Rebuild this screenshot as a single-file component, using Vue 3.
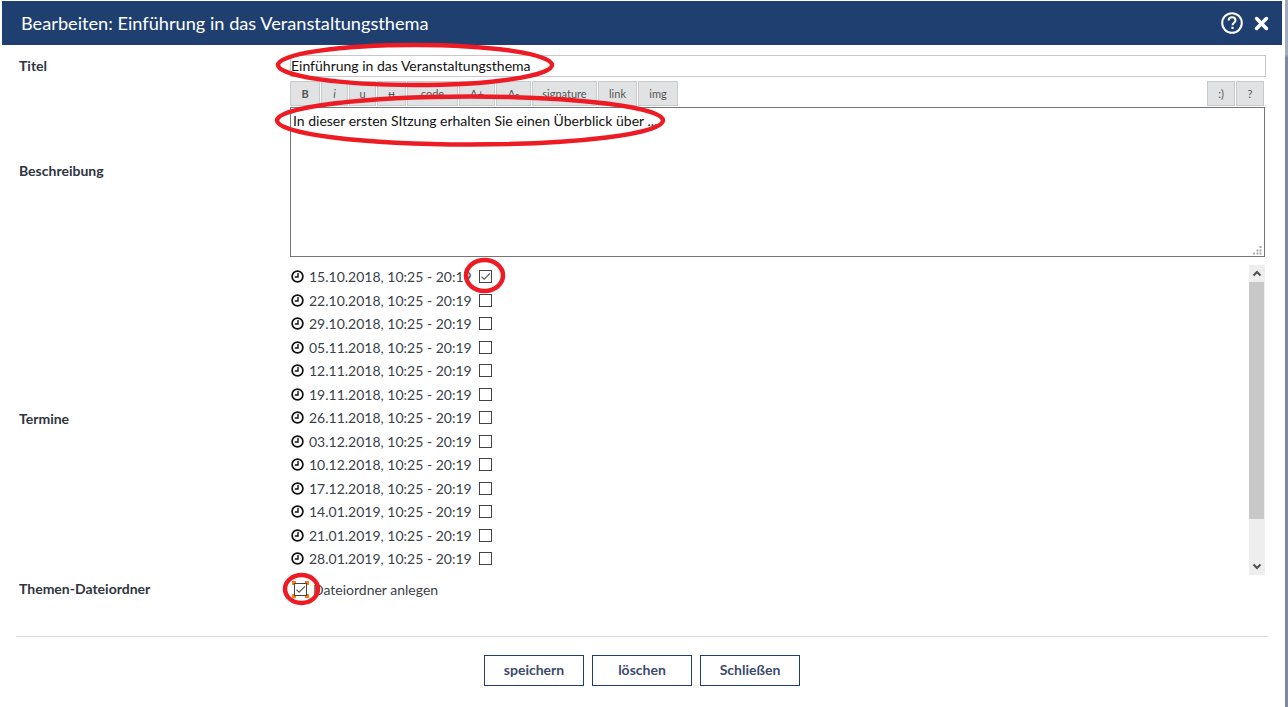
<template>
  <div class="page">
    <div class="dialog">
      <header class="titlebar">
        <span class="title">Bearbeiten: Einführung in das Veranstaltungsthema</span>
        <div class="title-icons">
          <svg width="22" height="22" viewBox="0 0 22 22">
            <circle cx="11" cy="11" r="9.8" fill="none" stroke="#fff" stroke-width="2" />
            <path d="M7.6 8.6c0-2.2 1.5-3.3 3.5-3.3s3.4 1.1 3.4 3c0 2.6-3 2.4-3 5" fill="none" stroke="#fff" stroke-width="2" />
            <rect x="10.4" y="14.8" width="2.2" height="2.2" fill="#fff" />
          </svg>
          <svg width="15" height="15" viewBox="0 0 15 15">
            <path d="M2.6 2.6l9.8 9.8M12.4 2.6l-9.8 9.8" stroke="#fff" stroke-width="3.6" stroke-linecap="round" />
          </svg>
        </div>
      </header>

      <form class="form" @submit.prevent>
        <label class="label label-title">Titel</label>
        <input class="title-input" type="text" value="Einführung in das Veranstaltungsthema" readonly />

        <label class="label label-desc">Beschreibung</label>
        <div class="editor">
          <div class="toolbar">
            <div class="tools">
              <button v-for="(b, i) in tools" :key="i" type="button" class="tool" :class="b.cls" :style="{ width: b.w + 'px' }">{{ b.text }}</button>
            </div>
            <div class="tools">
              <button type="button" class="tool small">:)</button>
              <button type="button" class="tool small">?</button>
            </div>
          </div>
          <div class="text-wrap">
            <textarea class="text" readonly>In dieser ersten SItzung erhalten Sie einen Überblick über ...</textarea>
            <svg class="grip" width="9" height="9" viewBox="0 0 9 9" fill="#a8a8a8">
              <rect x="6.5" y="0" width="2" height="2" />
              <rect x="3.5" y="3.5" width="2" height="2" />
              <rect x="6.5" y="3.5" width="2" height="2" />
              <rect x="0" y="6.5" width="2" height="2" />
              <rect x="3.5" y="6.5" width="2" height="2" />
              <rect x="6.5" y="6.5" width="2" height="2" />
            </svg>
          </div>
        </div>

        <label class="label label-dates">Termine</label>
        <div class="dates">
          <ul class="date-list">
            <li v-for="(d, i) in dates" :key="d" class="date">
              <svg class="clock" width="13" height="13" viewBox="0 0 13 13">
                <circle cx="6.5" cy="6.5" r="5.4" fill="none" stroke="#111" stroke-width="1.7" />
                <path d="M7 3v4H3.8" fill="none" stroke="#111" stroke-width="1.4" />
              </svg>
              <span class="date-text">{{ d }}, 10:25 - 20:19</span>
              <span class="check">
                <svg v-if="i === 0" width="11" height="11" viewBox="0 0 11 11">
                  <path d="M1.5 5.6l2.6 2.6L10 2.4" fill="none" stroke="#555" stroke-width="1.2" />
                </svg>
              </span>
            </li>
          </ul>
          <div class="scrollbar">
            <svg width="16" height="17" viewBox="0 0 16 17">
              <path d="M4.5 10.5L8 7l3.5 3.5" fill="none" stroke="#505050" stroke-width="2" />
            </svg>
            <div class="track"><div class="thumb"></div></div>
            <svg width="16" height="17" viewBox="0 0 16 17">
              <path d="M4.5 6.5L8 10l3.5-3.5" fill="none" stroke="#505050" stroke-width="2" />
            </svg>
          </div>
        </div>

        <label class="label label-folder">Themen-Dateiordner</label>
        <div class="folder">
          <span class="check focused">
            <svg width="11" height="11" viewBox="0 0 11 11">
              <path d="M1.5 5.6l2.6 2.6L10 2.4" fill="none" stroke="#555" stroke-width="1.2" />
            </svg>
            <svg class="corners" width="17" height="17" viewBox="0 0 17 17">
              <path d="M1 4V1h3M13 1h3v3M16 13v3h-3M4 16H1v-3" fill="none" stroke="#ff7a00" stroke-width="2" />
            </svg>
          </span>
          <span>Dateiordner anlegen</span>
        </div>
      </form>

      <div class="actions">
        <button type="button" class="action">speichern</button>
        <button type="button" class="action">löschen</button>
        <button type="button" class="action">Schließen</button>
      </div>
    </div>
    <div class="edge"></div>

    <!-- rote Markierungen aus dem Screenshot -->
    <svg class="marks" width="1288" height="707" viewBox="0 0 1288 707">
      <g fill="none" stroke="#ed1c24" stroke-width="4.5">
        <ellipse cx="415" cy="65" rx="137" ry="20" />
        <ellipse cx="470" cy="120.5" rx="193" ry="24" />
        <ellipse cx="484.5" cy="275.5" rx="18.5" ry="15.5" />
        <ellipse cx="301.5" cy="589" rx="16.5" ry="14" />
      </g>
    </svg>
  </div>
</template>

<script setup>
const tools = [
  { text: 'B', w: 30, cls: 'bold' },
  { text: 'i', w: 27, cls: 'italic' },
  { text: 'u', w: 27 },
  { text: 'u', w: 29, cls: 'strike' },
  { text: 'code', w: 51 },
  { text: 'A+', w: 36 },
  { text: 'A-', w: 35 },
  { text: 'signature', w: 65 },
  { text: 'link', w: 39 },
  { text: 'img', w: 40 }
]

const dates = [
  '15.10.2018', '22.10.2018', '29.10.2018', '05.11.2018', '12.11.2018',
  '19.11.2018', '26.11.2018', '03.12.2018', '10.12.2018', '17.12.2018',
  '14.01.2019', '21.01.2019', '28.01.2019'
]
</script>

<style>
html, body { background: #fff; overflow: hidden; }
</style>

<style scoped>
.page {
  position: relative;
  display: flex;
  height: 707px;
  font-family: Lato, "Open Sans", sans-serif;
  font-size: 14px;
  color: #3a3f48;
  background: #fff;
}
.dialog { width: 1280px; margin-left: 2px; padding-top: 1px; box-sizing: border-box; }
.edge {
  width: 3px;
  margin-left: 3px;
  background: linear-gradient(#a4acba 0, #a4acba 55px, #7c8aa3 57px);
}
.marks { position: absolute; left: 0; top: 0; pointer-events: none; }

.titlebar {
  display: flex;
  align-items: center;
  justify-content: space-between;
  height: 44px;
  padding: 0 13px 0 19px;
  background: #1f3f70;
  color: #fff;
  font-size: 18.2px;
}
.title-icons { display: flex; align-items: center; gap: 11px; }

.form {
  display: grid;
  grid-template-columns: 271px 975px;
  padding: 10px 0 0 17px;
  align-items: center;
}
.label { font-weight: 700; color: #2e3440; font-size: 14px; }
.label-title { padding-bottom: 2px; }
.label-desc { padding-top: 6px; }
.label-dates { padding-top: 4px; }
.label-folder { padding-bottom: 2px; }

.title-input {
  box-sizing: border-box;
  width: 976px;
  height: 22px;
  padding: 0 0 2px;
  border: 1px solid #c8c8c8;
  font: inherit;
  color: #111;
  outline: none;
}

.editor { margin-top: 4px; }
.toolbar { display: flex; justify-content: space-between; height: 26px; padding-right: 1px; }
.tools { display: flex; gap: 1px; }
.tool {
  box-sizing: border-box;
  height: 25px;
  padding: 0;
  border: 1px solid #c9cacb;
  background: #e1e2e3;
  font-family: inherit;
  font-size: 11px;
  color: #555;
}
.small { width: 28px; }
.bold { font-weight: 700; }
.italic { font-style: italic; }
.strike { text-decoration: line-through; }
.text-wrap { position: relative; }
.text {
  display: block;
  box-sizing: border-box;
  width: 975px;
  height: 150px;
  padding: 4px 2px;
  border: 1px solid #767676;
  font: inherit;
  color: #111;
  outline: none;
  resize: none;
}
.grip { position: absolute; right: 3px; bottom: 2px; }

.dates { display: flex; height: 310px; margin-top: 8px; }
.date-list {
  width: 959px;
  margin: 0;
  padding: 0;
  list-style: none;
  overflow: hidden;
}
.date { display: flex; align-items: center; height: 23.5px; }
.clock { margin: 0 5px 0 1px; }
.date-text { width: 170px; }
.check {
  display: flex;
  align-items: center;
  justify-content: center;
  box-sizing: border-box;
  width: 13px;
  height: 13px;
  border: 1px solid #444;
  background: #fff;
}
.scrollbar {
  display: flex;
  flex-direction: column;
  width: 16px;
  background: #eee;
}
.scrollbar svg { flex: none; }
.track { flex: 1; }
.thumb { width: 15px; height: 237px; background: #c8c8c8; }

.folder { display: flex; align-items: center; gap: 6px; height: 28px; }
.focused { position: relative; margin-left: 4px; }
.corners { position: absolute; left: -3px; top: -3px; }

.actions {
  display: flex;
  justify-content: center;
  gap: 8px;
  margin: 33px 14px 0;
  padding-top: 18px;
  border-top: 1px solid #d8dbe5;
}
.action {
  box-sizing: border-box;
  width: 100px;
  height: 31px;
  padding: 0 0 2px;
  border: 1px solid #1f3f70;
  background: #fff;
  font-family: inherit;
  font-size: 14px;
  font-weight: 700;
  color: #3b4a6e;
}
</style>
